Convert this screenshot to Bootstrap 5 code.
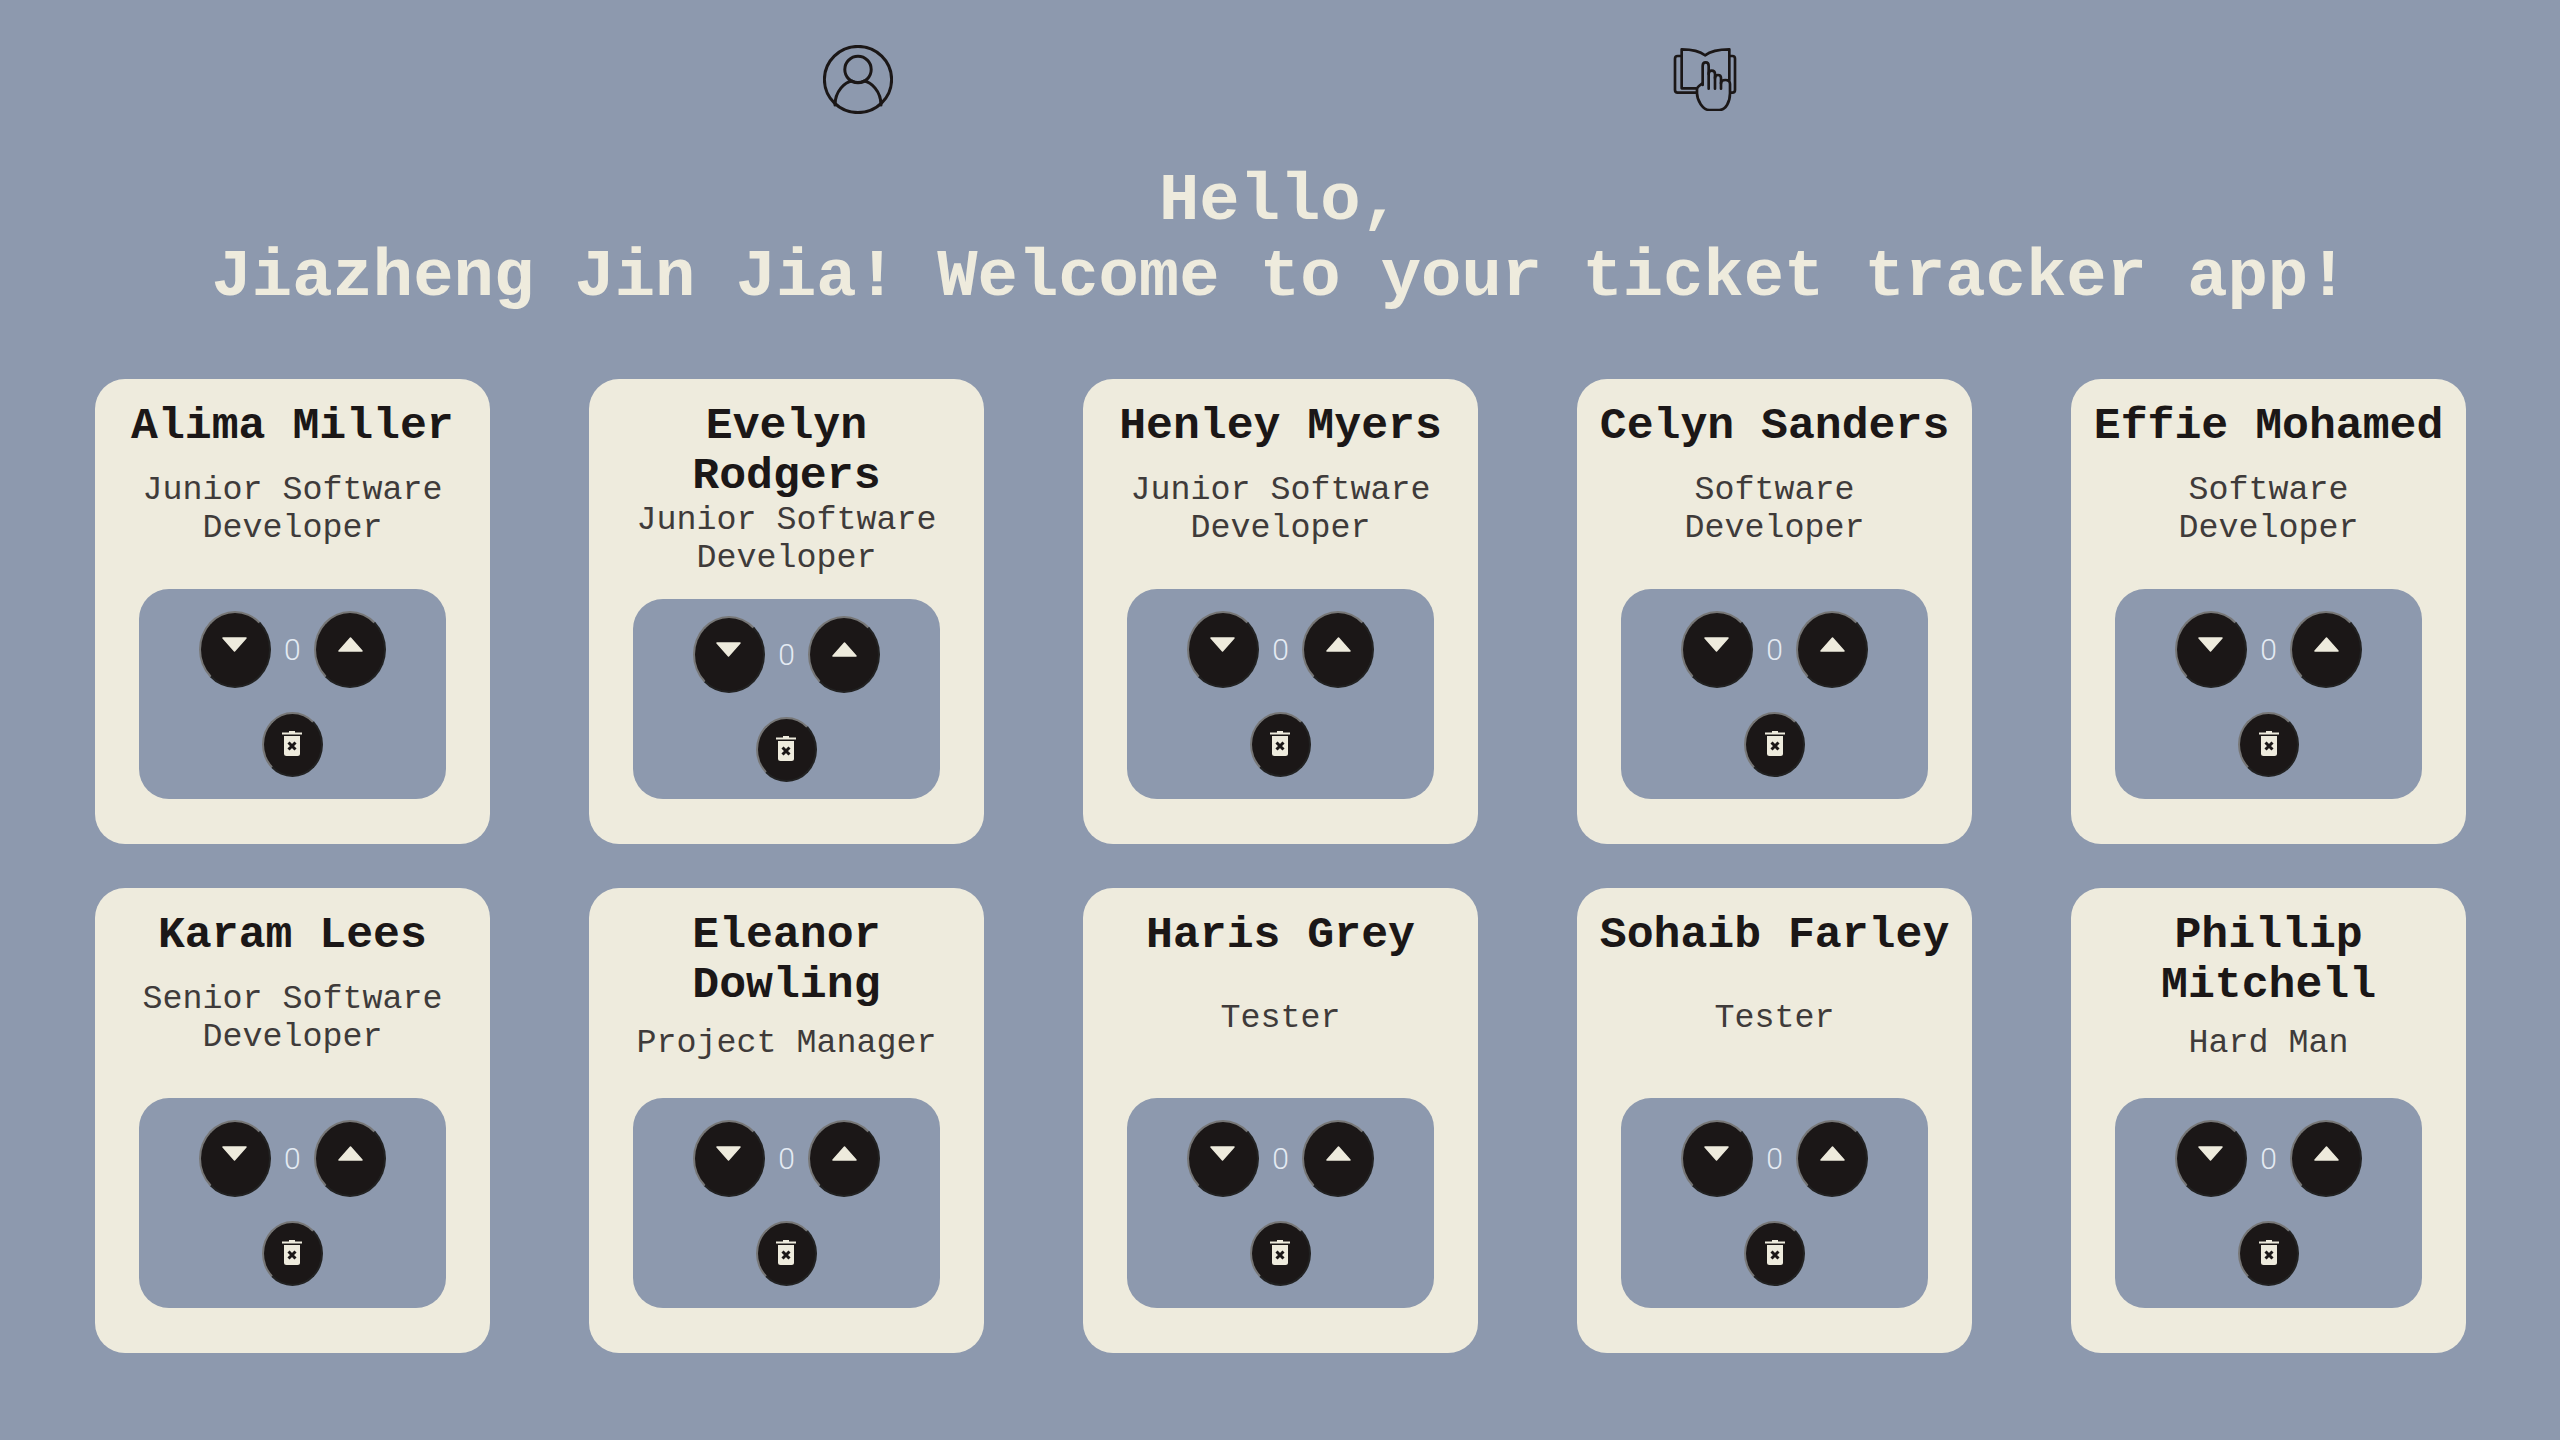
<!DOCTYPE html>
<html lang="en">

<head>
    <meta charset="UTF-8">
    <meta name="viewport" content="width=device-width, initial-scale=1.0">
    <title>Ticket Tracker</title>
    <link href="https://cdn.jsdelivr.net/npm/bootstrap@5.3.3/dist/css/bootstrap.min.css" rel="stylesheet">
    <style>
        body {
            background-color: #8d99ae;
            color: #1b1717;
            font-family: "Liberation Mono", "Courier New", monospace;
        }

        .top-icons {
            padding-top: 45px;
            gap: 780px;
            height: 114px;
        }

        .top-icons svg {
            fill: none;
            stroke: #1b1717;
            stroke-linecap: round;
            stroke-linejoin: round;
        }

        .book-link {
            margin-top: 3px;
        }

        .welcome {
            color: #eeebdd;
            font-size: 67.2px;
            font-weight: 700;
            line-height: 76px;
            margin: 49px 0 64px;
        }

        .ticket-grid {
            display: grid;
            grid-template-columns: repeat(5, 1fr);
            column-gap: 99.25px;
            row-gap: 44px;
            padding: 0 94px 0 95px;
        }

        .person-card {
            background-color: #eeebdd;
            border-radius: 30px;
            height: 465px;
            padding: 22px 20px 45px;
        }

        .person-name {
            font-size: 44.8px;
            font-weight: 700;
            line-height: 50px;
            margin: 0;
        }

        .person-job {
            color: #3f3b3a;
            flex: 1 1 0;
            font-size: 33.33px;
            line-height: 38px;
            margin-bottom: 22px;
        }

        .ticket-panel {
            background-color: #8d99ae;
            border-radius: 30px;
            flex: 0 1 210px;
            margin: 0 24px;
            min-height: 0;
        }

        .ticket-count {
            color: #e4ebf3;
            font-family: Roboto, sans-serif;
            font-size: 30px;
            font-weight: 300;
            margin: 0 13.5px;
        }

        .round-btn {
            background-color: #1b1717;
            border: 2px outset #777;
            border-radius: 50%;
            padding: 0;
        }

        .vote-btn {
            height: 77px;
            width: 72px;
        }

        .vote-btn svg {
            margin-bottom: 10px;
        }

        .trash-btn {
            height: 65px;
            margin-top: 24px;
            width: 61px;
        }

        .trash-btn svg {
            margin-bottom: 2px;
        }
    </style>
</head>

<body>

    <!-- Top icons -->
    <div class="top-icons d-flex justify-content-center">
        <a href="#" aria-label="Profile">
            <svg width="70" height="69" viewBox="0 0 70 69" stroke-width="3">
                <ellipse cx="35" cy="34.5" rx="33.6" ry="33.1" />
                <circle cx="35" cy="24.5" r="13.2" />
                <path d="M12 60C12 46 22 37 29 36C32 38 38 38 41 36C48 37 58 46 58 60" />
            </svg>
        </a>
        <a href="#" class="book-link" aria-label="Tickets">
            <svg width="64" height="63" viewBox="36 54 192 189" stroke-width="8">
                <path d="M60 78H50Q42 78 42 86V180Q42 188 50 188H105" />
                <path d="M205 78H214Q222 78 222 86V180Q222 188 214 188H208" />
                <path d="M105 175H62V58C90 58 115 62 132 76C150 62 178 58 205 58V150" />
                <path d="M125 165V108Q125 97 134 97Q143 97 143 108V176" />
                <path d="M143 132Q143 122 152 122Q162 122 162 132V176" />
                <path d="M162 144Q162 135 171 135Q180 135 180 144V176" />
                <path d="M180 160Q180 150 193 150Q207 150 207 162V190C207 215 195 240 175 240H145C125 240 108 210 108 190V178C108 170 118 165 125 160" />
            </svg>
        </a>
    </div>

    <h1 class="welcome text-center">Hello,<br>Jiazheng Jin Jia! Welcome to your ticket tracker app!</h1>

    <div class="ticket-grid" id="cardsContainer">
        <!-- Cards will be dynamically generated here -->
    </div>

    <script src="https://cdn.jsdelivr.net/npm/bootstrap@5.3.3/dist/js/bootstrap.bundle.min.js"></script>

    <script>
        const people = [
            { name: "Alima Miller", job: "Junior Software Developer" },
            { name: "Evelyn Rodgers", job: "Junior Software Developer" },
            { name: "Henley Myers", job: "Junior Software Developer" },
            { name: "Celyn Sanders", job: "Software Developer" },
            { name: "Effie Mohamed", job: "Software Developer" },
            { name: "Karam Lees", job: "Senior Software Developer" },
            { name: "Eleanor Dowling", job: "Project Manager" },
            { name: "Haris Grey", job: "Tester" },
            { name: "Sohaib Farley", job: "Tester" },
            { name: "Phillip Mitchell", job: "Hard Man" }
        ];

        const downIcon = `<svg width="25" height="15" viewBox="0 0 25 15"><path d="M1 1H24L12.5 14Z" fill="#eeebdd" stroke="#eeebdd" stroke-width="1.5" stroke-linejoin="round"/></svg>`;
        const upIcon = `<svg width="25" height="15" viewBox="0 0 25 15"><path d="M1 14H24L12.5 1Z" fill="#eeebdd" stroke="#eeebdd" stroke-width="1.5" stroke-linejoin="round"/></svg>`;
        const trashIcon = `<svg width="20" height="25" viewBox="0 0 20 25">
            <path d="M7 0H13V1.5H20V3.5H0V1.5H7Z" fill="#eeebdd"/>
            <path d="M2 5H18V22.5Q18 25 15.5 25H4.5Q2 25 2 22.5Z" fill="#eeebdd"/>
            <path d="M6.5 11.5L13.5 18.5M13.5 11.5L6.5 18.5" stroke="#1b1717" stroke-width="3"/>
        </svg>`;

        const container = document.getElementById('cardsContainer');

        people.forEach(person => {
            const card = document.createElement('div');
            card.classList.add('person-card', 'd-flex', 'flex-column', 'text-center');
            card.innerHTML = `
                <h2 class="person-name">${person.name}</h2>
                <div class="person-job d-flex align-items-center justify-content-center">${person.job}</div>
                <div class="ticket-panel d-flex flex-column align-items-center justify-content-center">
                    <div class="d-flex align-items-center">
                        <button class="round-btn vote-btn" aria-label="Down">${downIcon}</button>
                        <span class="ticket-count">0</span>
                        <button class="round-btn vote-btn" aria-label="Up">${upIcon}</button>
                    </div>
                    <button class="round-btn trash-btn" aria-label="Delete">${trashIcon}</button>
                </div>
            `;
            container.appendChild(card);
        });
    </script>

</body>

</html>
